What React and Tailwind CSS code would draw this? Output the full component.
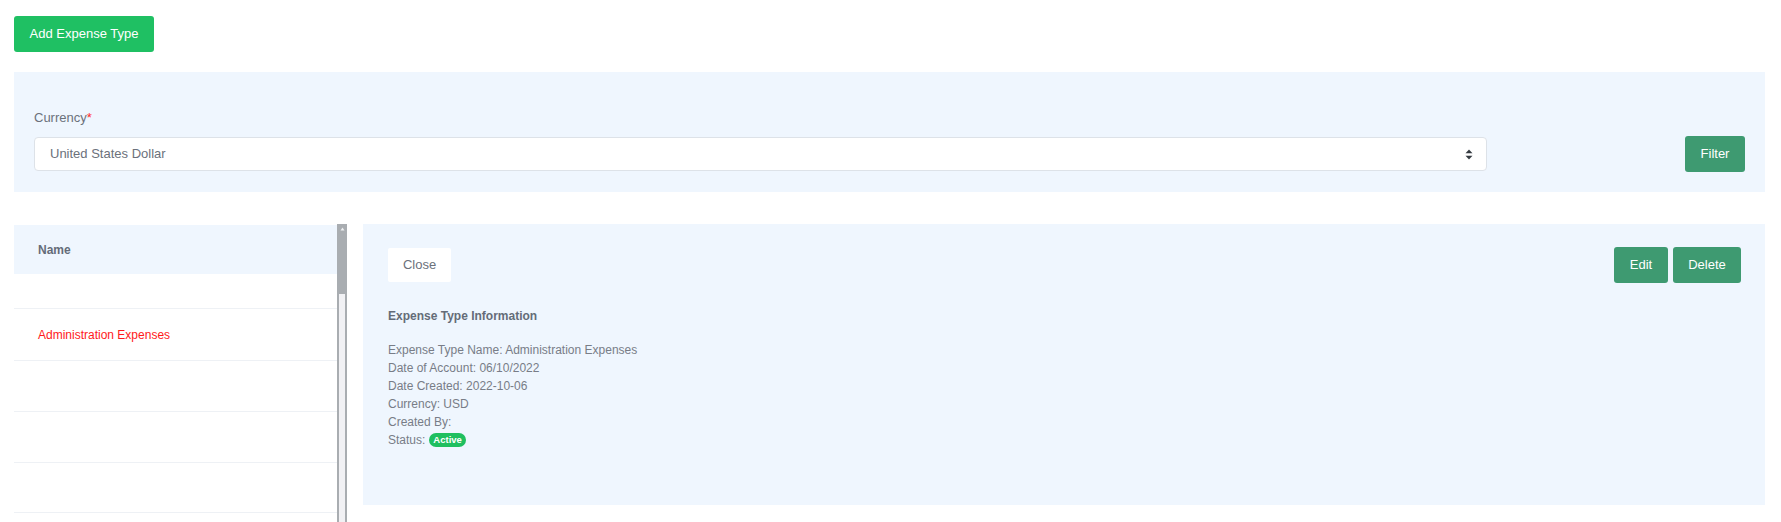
export default function App() {
    const rows = [
        { name: '', h: 'h-[35px]' },
        { name: 'Administration Expenses', h: 'h-[52px]' },
        { name: '', h: 'h-[51px]' },
        { name: '', h: 'h-[51px]' },
        { name: '', h: 'h-[50px]' },
        { name: '', h: 'h-[51px]' },
    ];

    const details = [
        'Expense Type Name: Administration Expenses',
        'Date of Account: 06/10/2022',
        'Date Created: 2022-10-06',
        'Currency: USD',
        'Created By:',
    ];

    return (
        <div className="w-[1781px] h-[522px] overflow-hidden bg-white pl-[14px] pr-[16px] pt-[16px] font-['Liberation_Sans',Arial,sans-serif]">
            {/* Top action */}
            <button className="w-[140px] h-[36px] rounded-[3px] bg-[#1fc063] text-white text-[13px]">
                Add Expense Type
            </button>

            {/* Filter panel */}
            <div className="mt-5 h-[120px] bg-[#eff6fe] px-5 pt-[36px]">
                <div className="text-[13px] leading-[20px] text-[#6b717b]">
                    Currency<span className="text-[#ff2a2a]">*</span>
                </div>
                <div className="mt-[9px] flex items-start">
                    <div className="w-[1453px] h-[34px] bg-white border border-[#dde2e8] rounded-[4px] flex items-center justify-between pl-[15px] pr-[13px]">
                        <span className="text-[13px] text-[#6b717b]">United States Dollar</span>
                        <svg width="8" height="11" viewBox="0 0 8 11">
                            <path d="M4 0.5L7.5 4.3H0.5Z" fill="#343a40" />
                            <path d="M4 10.5L7.5 6.7H0.5Z" fill="#343a40" />
                        </svg>
                    </div>
                    <button className="ml-auto -mt-[1px] w-[60px] h-[36px] rounded-[3px] bg-[#3e9a71] text-white text-[13px]">
                        Filter
                    </button>
                </div>
            </div>

            {/* Master / detail */}
            <div className="mt-8 flex gap-4">
                <div className="w-[333px] h-[298px] overflow-hidden flex">
                    <div className="w-[323px]">
                        <div className="mt-[1px] h-[49px] bg-[#eff6fe] flex items-center pl-[24px] text-[12px] font-bold text-[#646c78]">
                            Name
                        </div>
                        {rows.map((r, i) => (
                            <div key={i} className={`${r.h} border-b border-[#eef1f5] flex items-center pl-[24px] text-[12px] text-[#ff1a1a]`}>
                                {r.name}
                            </div>
                        ))}
                    </div>
                    {/* scrollbar */}
                    <div className="w-[10px] h-full flex flex-col border-x-2 border-[#a9adb1] bg-[#f1f1f4]">
                        <div className="h-[70px] bg-[#a9adb1] -mx-[2px] flex justify-center pt-[3px]">
                            <svg width="5" height="4" viewBox="0 0 5 4">
                                <path d="M2.5 0.5L4.5 3.5H0.5Z" fill="#eef0f2" />
                            </svg>
                        </div>
                    </div>
                </div>

                <div className="flex-1 h-[281px] bg-[#eff6fe] pl-[25px] pr-[24px] pt-[23px]">
                    <div className="flex items-center justify-between">
                        <button className="w-[63px] h-[34px] bg-white rounded-[2px] text-[13px] text-[#6b717b]">
                            Close
                        </button>
                        <div className="flex gap-[5px]">
                            <button className="w-[54px] h-[36px] rounded-[3px] bg-[#3e9a71] text-white text-[13px]">Edit</button>
                            <button className="w-[68px] h-[36px] rounded-[3px] bg-[#3e9a71] text-white text-[13px]">Delete</button>
                        </div>
                    </div>

                    <div className="mt-[24px] text-[12px] leading-[18px] font-bold text-[#646c78]">
                        Expense Type Information
                    </div>

                    <div className="mt-[16px] text-[12px] leading-[18px] text-[#787d87]">
                        {details.map((d) => (
                            <div key={d}>{d}</div>
                        ))}
                        <div className="flex items-center gap-[4px]">
                            Status:
                            <span className="inline-flex items-center h-[14px] px-[4px] rounded-full bg-[#1fbf5f] text-white text-[9.5px] font-bold">
                                Active
                            </span>
                        </div>
                    </div>
                </div>
            </div>
        </div>
    );
}
